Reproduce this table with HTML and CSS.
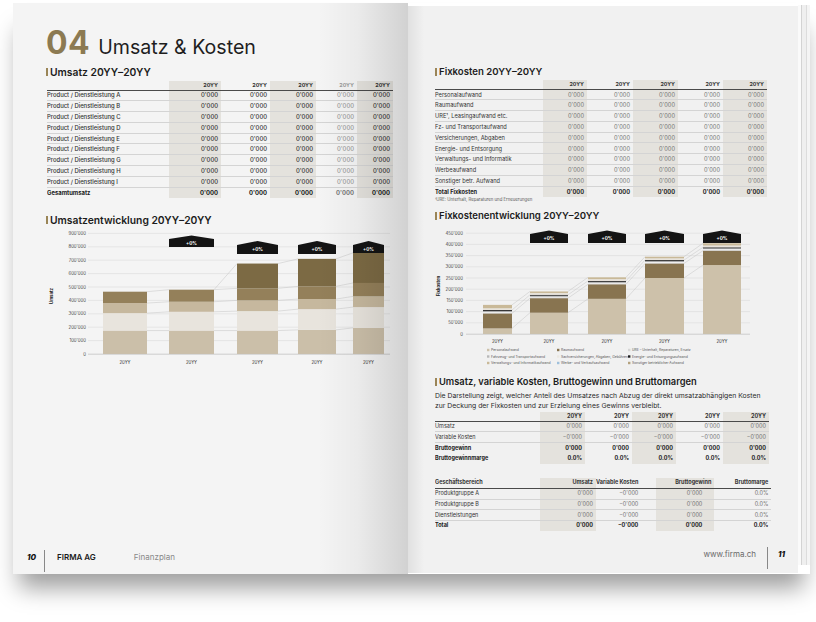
FILE: index.html
```html
<!DOCTYPE html>
<html lang="de">
<head>
<meta charset="utf-8">
<title>Umsatz &amp; Kosten – Finanzplan</title>
<link rel="stylesheet" href="styles.css">
</head>
<body>
<div class="book">
  <section class="page page-left">
    <div class="content">
      <h1 class="title"><span class="num">04</span><span class="title-text">Umsatz &amp; Kosten</span></h1>
      <h2 class="sec sec-a">Umsatz 20YY–20YY</h2>
      <table class="tbl tbl-umsatz">
        <colgroup><col class="w122"><col class="w52"><col class="w49"><col class="w46"><col class="w41"><col class="w36"></colgroup>
        <thead><tr><th></th><th class="sh">20YY</th><th>20YY</th><th class="sh">20YY</th><th class="fade">20YY</th><th class="sh">20YY</th></tr></thead>
        <tbody>
          <tr><td>Product / Dienstleistung A</td><td class="sh">0'000</td><td>0'000</td><td class="sh">0'000</td><td class="fade">0'000</td><td class="sh">0'000</td></tr>
          <tr><td>Product / Dienstleistung B</td><td class="sh">0'000</td><td>0'000</td><td class="sh">0'000</td><td class="fade">0'000</td><td class="sh">0'000</td></tr>
          <tr><td>Product / Dienstleistung C</td><td class="sh">0'000</td><td>0'000</td><td class="sh">0'000</td><td class="fade">0'000</td><td class="sh">0'000</td></tr>
          <tr><td>Product / Dienstleistung D</td><td class="sh">0'000</td><td>0'000</td><td class="sh">0'000</td><td class="fade">0'000</td><td class="sh">0'000</td></tr>
          <tr><td>Product / Dienstleistung E</td><td class="sh">0'000</td><td>0'000</td><td class="sh">0'000</td><td class="fade">0'000</td><td class="sh">0'000</td></tr>
          <tr><td>Product / Dienstleistung F</td><td class="sh">0'000</td><td>0'000</td><td class="sh">0'000</td><td class="fade">0'000</td><td class="sh">0'000</td></tr>
          <tr><td>Product / Dienstleistung G</td><td class="sh">0'000</td><td>0'000</td><td class="sh">0'000</td><td class="fade">0'000</td><td class="sh">0'000</td></tr>
          <tr><td>Product / Dienstleistung H</td><td class="sh">0'000</td><td>0'000</td><td class="sh">0'000</td><td class="fade">0'000</td><td class="sh">0'000</td></tr>
          <tr><td>Product / Dienstleistung I</td><td class="sh">0'000</td><td>0'000</td><td class="sh">0'000</td><td class="fade">0'000</td><td class="sh">0'000</td></tr>
          <tr class="total"><td>Gesamtumsatz</td><td class="sh">0'000</td><td>0'000</td><td class="sh">0'000</td><td class="fade">0'000</td><td class="sh">0'000</td></tr>
        </tbody>
      </table>
      <h2 class="sec sec-b">Umsatzentwicklung 20YY–20YY</h2>
      <svg class="chart chart-umsatz" width="355" height="142" viewBox="0 0 355 142">
        <g class="grid">
          <path d="M48 126H350M48 112.6H350M48 99.2H350M48 85.8H350M48 72.4H350M48 59H350M48 45.6H350M48 32.2H350M48 18.8H350M48 5.4H350"/>
        </g>
        <g class="ylab" text-anchor="end">
          <text x="46" y="127.6">0</text>
          <text x="46" y="114.2">100'000</text>
          <text x="46" y="100.8">200'000</text>
          <text x="46" y="87.4">300'000</text>
          <text x="46" y="74">400'000</text>
          <text x="46" y="60.6">500'000</text>
          <text x="46" y="47.2">600'000</text>
          <text x="46" y="33.8">700'000</text>
          <text x="46" y="20.4">800'000</text>
          <text x="46" y="7">900'000</text>
        </g>
        <text class="axis-title" transform="translate(13 68) rotate(-90)" text-anchor="middle">Umsatz</text>
        <g transform="translate(0 126) scale(1 -0.134)">
          <rect class="u1" x="63" y="0" width="44" height="175"/>
          <rect class="u2" x="63" y="175" width="44" height="130"/>
          <rect class="u3" x="63" y="305" width="44" height="75"/>
          <rect class="u4" x="63" y="380" width="44" height="85"/>

          <rect class="u1" x="129" y="0" width="45" height="175"/>
          <rect class="u2" x="129" y="175" width="45" height="140"/>
          <rect class="u3" x="129" y="315" width="45" height="75"/>
          <rect class="u4" x="129" y="390" width="45" height="90"/>

          <rect class="u1" x="197" y="0" width="41" height="175"/>
          <rect class="u2" x="197" y="175" width="41" height="145"/>
          <rect class="u3" x="197" y="320" width="41" height="80"/>
          <rect class="u4" x="197" y="400" width="41" height="90"/>
          <rect class="u5" x="197" y="490" width="41" height="185"/>

          <rect class="u1" x="258" y="0" width="38" height="180"/>
          <rect class="u2" x="258" y="180" width="38" height="155"/>
          <rect class="u3" x="258" y="335" width="38" height="75"/>
          <rect class="u4" x="258" y="410" width="38" height="95"/>
          <rect class="u5" x="258" y="505" width="38" height="205"/>

          <rect class="u1" x="313" y="0" width="31" height="195"/>
          <rect class="u2" x="313" y="195" width="31" height="155"/>
          <rect class="u3" x="313" y="350" width="31" height="80"/>
          <rect class="u4" x="313" y="430" width="31" height="100"/>
          <rect class="u5" x="313" y="530" width="31" height="225"/>

          <path class="link" d="M107 175L129 175M174 175L197 175M238 175L258 180M296 180L313 195M107 305L129 315M174 315L197 320M238 320L258 335M296 335L313 350M107 380L129 390M174 390L197 400M238 400L258 410M296 410L313 430M107 465L129 480M174 480L197 490M238 490L258 505M296 505L313 530M174 480L197 675M238 675L258 710M296 710L313 755"/>
        </g>
        <path class="axis" d="M48 126.3H350"/>
        <g class="badge">
          <path d="M129 11L151.5 7.5L174 11V19H129Z"/>
          <path d="M197 17L217.5 13L238 17V26H197Z"/>
          <path d="M258 17L277 13L296 17V26H258Z"/>
          <path d="M313 17L328.5 13L344 17V25H313Z"/>
        </g>
        <g class="badge-t" text-anchor="middle">
          <text x="151.5" y="16.8">+0%</text>
          <text x="217.5" y="23.3">+0%</text>
          <text x="277" y="23.3">+0%</text>
          <text x="328.5" y="22.8">+0%</text>
        </g>
        <g class="xlab" text-anchor="middle">
          <text x="85" y="136">20YY</text>
          <text x="151.5" y="136">20YY</text>
          <text x="217.5" y="136">20YY</text>
          <text x="277" y="136">20YY</text>
          <text x="328.5" y="136">20YY</text>
        </g>
      </svg>
    </div>
    <footer class="foot foot-left">
      <span class="pnum">10</span>
      <span class="firm">FIRMA AG</span>
      <span class="doc">Finanzplan</span>
    </footer>
  </section>

  <section class="page page-right">
    <div class="content">
      <h2 class="sec sec-c">Fixkosten 20YY–20YY</h2>
      <table class="tbl tbl-fix">
        <colgroup><col class="w108"><col class="w44"><col class="w46"><col class="w45"><col class="w45"><col class="w44"></colgroup>
        <thead><tr><th></th><th class="sh">20YY</th><th>20YY</th><th class="sh">20YY</th><th>20YY</th><th class="sh">20YY</th></tr></thead>
        <tbody>
          <tr><td>Personalaufwand</td><td class="sh">0'000</td><td>0'000</td><td class="sh">0'000</td><td>0'000</td><td class="sh">0'000</td></tr>
          <tr><td>Raumaufwand</td><td class="sh">0'000</td><td>0'000</td><td class="sh">0'000</td><td>0'000</td><td class="sh">0'000</td></tr>
          <tr><td>URE¹, Leasingaufwand etc.</td><td class="sh">0'000</td><td>0'000</td><td class="sh">0'000</td><td>0'000</td><td class="sh">0'000</td></tr>
          <tr><td>Fz- und Transportaufwand</td><td class="sh">0'000</td><td>0'000</td><td class="sh">0'000</td><td>0'000</td><td class="sh">0'000</td></tr>
          <tr><td>Versicherungen, Abgaben</td><td class="sh">0'000</td><td>0'000</td><td class="sh">0'000</td><td>0'000</td><td class="sh">0'000</td></tr>
          <tr><td>Energie- und Entsorgung</td><td class="sh">0'000</td><td>0'000</td><td class="sh">0'000</td><td>0'000</td><td class="sh">0'000</td></tr>
          <tr><td>Verwaltungs- und Informatik</td><td class="sh">0'000</td><td>0'000</td><td class="sh">0'000</td><td>0'000</td><td class="sh">0'000</td></tr>
          <tr><td>Werbeaufwand</td><td class="sh">0'000</td><td>0'000</td><td class="sh">0'000</td><td>0'000</td><td class="sh">0'000</td></tr>
          <tr><td>Sonstiger betr. Aufwand</td><td class="sh">0'000</td><td>0'000</td><td class="sh">0'000</td><td>0'000</td><td class="sh">0'000</td></tr>
          <tr class="total"><td>Total Fixkosten</td><td class="sh">0'000</td><td>0'000</td><td class="sh">0'000</td><td>0'000</td><td class="sh">0'000</td></tr>
        </tbody>
      </table>
      <p class="note">¹URE: Unterhalt, Reparaturen und Erneuerungen</p>

      <h2 class="sec sec-d">Fixkostenentwicklung 20YY–20YY</h2>
      <svg class="chart chart-fix" width="330" height="140" viewBox="0 0 330 140">
        <g class="grid">
          <path d="M36 107H320M36 95.8H320M36 84.6H320M36 73.4H320M36 62.2H320M36 51H320M36 39.8H320M36 28.6H320M36 17.4H320M36 6.2H320"/>
        </g>
        <g class="ylab" text-anchor="end">
          <text x="33" y="108.5">0</text>
          <text x="33" y="97.3">50'000</text>
          <text x="33" y="86.1">100'000</text>
          <text x="33" y="74.9">150'000</text>
          <text x="33" y="63.7">200'000</text>
          <text x="33" y="52.5">250'000</text>
          <text x="33" y="41.3">300'000</text>
          <text x="33" y="30.1">350'000</text>
          <text x="33" y="18.9">400'000</text>
          <text x="33" y="7.7">450'000</text>
        </g>
        <text class="axis-title" transform="translate(9.5 59) rotate(-90)" text-anchor="middle">Fixkosten</text>
        <g transform="translate(0 107) scale(1 -0.224)">
          <rect class="f1" x="53" y="0" width="29" height="25"/>
          <rect class="f2" x="53" y="25" width="29" height="67"/>
          <rect class="f3" x="53" y="92" width="29" height="4"/>
          <rect class="f4" x="53" y="96" width="29" height="3"/>
          <rect class="f5" x="53" y="99" width="29" height="4"/>
          <rect class="f6" x="53" y="103" width="29" height="4"/>
          <rect class="f7" x="53" y="107" width="29" height="8"/>
          <rect class="f8" x="53" y="115" width="29" height="15"/>

          <rect class="f1" x="100" y="0" width="38" height="95"/>
          <rect class="f2" x="100" y="95" width="38" height="65"/>
          <rect class="f3" x="100" y="160" width="38" height="4"/>
          <rect class="f4" x="100" y="164" width="38" height="3"/>
          <rect class="f5" x="100" y="167" width="38" height="4"/>
          <rect class="f6" x="100" y="171" width="38" height="4"/>
          <rect class="f7" x="100" y="175" width="38" height="8"/>
          <rect class="f8" x="100" y="183" width="38" height="7"/>

          <rect class="f1" x="158" y="0" width="38" height="157"/>
          <rect class="f2" x="158" y="157" width="38" height="65"/>
          <rect class="f3" x="158" y="222" width="38" height="4"/>
          <rect class="f4" x="158" y="226" width="38" height="3"/>
          <rect class="f5" x="158" y="229" width="38" height="4"/>
          <rect class="f6" x="158" y="233" width="38" height="4"/>
          <rect class="f7" x="158" y="237" width="38" height="8"/>
          <rect class="f8" x="158" y="245" width="38" height="8"/>

          <rect class="f1" x="215" y="0" width="39" height="250"/>
          <rect class="f2" x="215" y="250" width="39" height="65"/>
          <rect class="f3" x="215" y="315" width="39" height="4"/>
          <rect class="f4" x="215" y="319" width="39" height="3"/>
          <rect class="f5" x="215" y="322" width="39" height="4"/>
          <rect class="f6" x="215" y="326" width="39" height="4"/>
          <rect class="f7" x="215" y="330" width="39" height="8"/>
          <rect class="f8" x="215" y="338" width="39" height="7"/>

          <rect class="f1" x="273" y="0" width="38" height="308"/>
          <rect class="f2" x="273" y="308" width="38" height="64"/>
          <rect class="f3" x="273" y="372" width="38" height="4"/>
          <rect class="f4" x="273" y="376" width="38" height="3"/>
          <rect class="f5" x="273" y="379" width="38" height="4"/>
          <rect class="f6" x="273" y="383" width="38" height="4"/>
          <rect class="f7" x="273" y="387" width="38" height="8"/>
          <rect class="f8" x="273" y="395" width="38" height="10"/>

          <path class="link" d="M82 25L100 95M138 95L158 157M196 157L215 250M254 250L273 308M82 92L100 160M138 160L158 222M196 222L215 315M254 315L273 372M82 107L100 175M138 175L158 237M196 237L215 330M254 330L273 387M82 130L100 190M138 190L158 253M196 253L215 345M254 345L273 405"/>
        </g>
        <path class="axis" d="M36 107.3H320"/>
        <g class="badge">
          <path d="M100 7L119 3.5L138 7V16H100Z"/>
          <path d="M158 7L177 3.5L196 7V16H158Z"/>
          <path d="M215 7L234.5 3.5L254 7V16H215Z"/>
          <path d="M273 7L292 3.5L311 7V16H273Z"/>
        </g>
        <g class="badge-t" text-anchor="middle">
          <text x="119" y="13.3">+0%</text>
          <text x="177" y="13.3">+0%</text>
          <text x="234.5" y="13.3">+0%</text>
          <text x="292" y="13.3">+0%</text>
        </g>
        <g class="xlab" text-anchor="middle">
          <text x="67.5" y="116">20YY</text>
          <text x="119" y="116">20YY</text>
          <text x="177" y="116">20YY</text>
          <text x="234.5" y="116">20YY</text>
          <text x="292" y="116">20YY</text>
        </g>
        <g class="legend">
          <rect class="f1" x="57" y="121.8" width="2.4" height="2.4"/><text x="61" y="124.2">Personalaufwand</text>
          <rect class="f2" x="127" y="121.8" width="2.4" height="2.4"/><text x="131" y="124.2">Raumaufwand</text>
          <rect class="f3" x="198" y="121.8" width="2.4" height="2.4"/><text x="202" y="124.2">URE – Unterhalt, Reparaturen, Ersatz</text>
          <rect class="lg-grey" x="57" y="128.3" width="2.4" height="2.4"/><text x="61" y="130.7">Fahrzeug- und Transportaufwand</text>
          <rect class="lg-light" x="127" y="128.3" width="2.4" height="2.4"/><text x="131" y="130.7">Sachversicherungen, Abgaben, Gebühren</text>
          <rect class="f6" x="198" y="128.3" width="2.4" height="2.4"/><text x="202" y="130.7">Energie- und Entsorgungsaufwand</text>
          <rect class="f8" x="57" y="134.8" width="2.4" height="2.4"/><text x="61" y="137.2">Verwaltungs- und Informatikaufwand</text>
          <rect class="lg-blue" x="127" y="134.8" width="2.4" height="2.4"/><text x="131" y="137.2">Werbe- und Verkaufsaufwand</text>
          <rect class="lg-tan" x="198" y="134.8" width="2.4" height="2.4"/><text x="202" y="137.2">Sonstiger betrieblicher Aufwand</text>
        </g>
      </svg>

      <h2 class="sec sec-e">Umsatz, variable Kosten, Bruttogewinn und Bruttomargen</h2>
      <p class="lead">Die Darstellung zeigt, welcher Anteil des Umsatzes nach Abzug der direkt umsatzabhängigen Kosten zur Deckung der Fixkosten und zur Erzielung eines Gewinns verbleibt.</p>
      <table class="tbl tbl-brutto">
        <colgroup><col class="w105"><col class="w45"><col class="w47"><col class="w44"><col class="w47"><col class="w46"></colgroup>
        <thead><tr><th></th><th class="sh">20YY</th><th>20YY</th><th class="sh">20YY</th><th>20YY</th><th class="sh">20YY</th></tr></thead>
        <tbody>
          <tr><td>Umsatz</td><td class="sh">0'000</td><td>0'000</td><td class="sh">0'000</td><td>0'000</td><td class="sh">0'000</td></tr>
          <tr><td>Variable Kosten</td><td class="sh">−0'000</td><td>−0'000</td><td class="sh">−0'000</td><td>−0'000</td><td class="sh">−0'000</td></tr>
          <tr class="total"><td>Bruttogewinn</td><td class="sh">0'000</td><td>0'000</td><td class="sh">0'000</td><td>0'000</td><td class="sh">0'000</td></tr>
          <tr class="bold"><td>Bruttogewinnmarge</td><td class="sh">0.0%</td><td>0.0%</td><td class="sh">0.0%</td><td>0.0%</td><td class="sh">0.0%</td></tr>
        </tbody>
      </table>
      <table class="tbl tbl-bereich">
        <colgroup><col class="w105"><col class="w56"><col class="w58"><col class="w58"><col class="w57"></colgroup>
        <thead><tr><th>Geschäftsbereich</th><th class="sh">Umsatz</th><th class="pad-var">Variable Kosten</th><th class="sh">Bruttogewinn</th><th>Bruttomarge</th></tr></thead>
        <tbody>
          <tr><td>Produktgruppe A</td><td class="sh">0'000</td><td class="pad-var">−0'000</td><td class="sh pad-bg">0'000</td><td>0.0%</td></tr>
          <tr><td>Produktgruppe B</td><td class="sh">0'000</td><td class="pad-var">−0'000</td><td class="sh pad-bg">0'000</td><td>0.0%</td></tr>
          <tr><td>Dienstleistungen</td><td class="sh">0'000</td><td class="pad-var">−0'000</td><td class="sh pad-bg">0'000</td><td>0.0%</td></tr>
          <tr class="total"><td>Total</td><td class="sh">0'000</td><td class="pad-var">−0'000</td><td class="sh pad-bg">0'000</td><td>0.0%</td></tr>
        </tbody>
      </table>
    </div>
    <footer class="foot foot-right">
      <span class="url">www.firma.ch</span>
      <span class="pnum pnum-r">11</span>
    </footer>
  </section>
  <div class="edge"></div>
</div>
</body>
</html>
```

FILE: styles.css
```css
html, body {
  margin: 0;
  padding: 0;
  width: 816px;
  height: 622px;
  overflow: hidden;
  background: #ffffff;
  font-family: Inter, "Noto Sans", "Liberation Sans", sans-serif;
  color: #222;
}

.book {
  display: flex;
  align-items: flex-start;
  margin: 3px 0 0 13px;
  width: 797px;
  box-shadow: 0 20px 22px -6px rgba(0, 0, 0, 0.38);
}

.page {
  position: relative;
  display: flex;
  flex-direction: column;
  box-sizing: border-box;
}

.page-left {
  width: 395px;
  height: 571px;
  padding: 24px 0 2px 14px;
  background: #f4f4f4;
}

.page-left::after {
  content: "";
  position: absolute;
  top: 0;
  right: 0;
  bottom: 0;
  width: 90px;
  background: linear-gradient(90deg, rgba(0,0,0,0) 0%, rgba(0,0,0,0.04) 45%, rgba(0,0,0,0.14) 100%);
  pointer-events: none;
}

.page-right {
  width: 390px;
  height: 567px;
  margin-top: 3px;
  padding: 54px 0 4px 27px;
  background: #f1f1f1;
}

.page-right::before {
  content: "";
  position: absolute;
  top: 0;
  left: 0;
  bottom: 0;
  width: 16px;
  background: linear-gradient(90deg, rgba(0,0,0,0.07), rgba(0,0,0,0));
  pointer-events: none;
}

.page-left .content {
  margin-left: 19px;
}

.edge {
  width: 12px;
  height: 560px;
  margin-top: 2px;
  background: linear-gradient(90deg, #fafafa 0 3px, #d3d3d3 3px 4px, #efefef 4px 8px, #dcdcdc 8px 9px, #f4f4f4 9px 12px);
}

/* Title */
.title {
  display: flex;
  align-items: baseline;
  margin: 0;
  height: 32px;
  line-height: 32px;
  font-weight: 400;
}

.num {
  font-size: 32px;
  font-weight: 700;
  color: #8c7a52;
  letter-spacing: 0.5px;
}

.title-text {
  margin-left: 8px;
  font-size: 19.6px;
  color: #1e1e1e;
}

/* Section headings */
.sec {
  display: flex;
  align-items: center;
  margin: 0;
  height: 12px;
  font-size: 10.3px;
  line-height: 12px;
  font-weight: 600;
  color: #1c1c1c;
  white-space: nowrap;
}

.sec::before {
  content: "";
  width: 2px;
  height: 8px;
  margin-right: 2px;
  background: #9a8557;
}

.sec-a { margin-top: 7px; }
.sec-b { margin-top: 16px; }
.sec-c { margin-top: 6px; font-size: 9.6px; }
.sec-d { margin-top: 7px; font-size: 9.6px; }
.sec-e { margin-top: 9px; font-size: 9.3px; }

/* Tables */
.tbl {
  border-collapse: collapse;
  table-layout: fixed;
  font-size: 5.5px;
  color: #333;
}

.tbl th,
.tbl td {
  box-sizing: border-box;
  height: 10.8px;
  padding: 0 3px 0 0;
  text-align: right;
  line-height: 1;
  white-space: nowrap;
  overflow: hidden;
  border-bottom: 0.5px solid #d4d4d4;
}

.tbl th:first-child,
.tbl td:first-child {
  text-align: left;
  padding: 0;
}

.tbl thead th {
  height: 9px;
  font-weight: 700;
  border-bottom: 1px solid #4a4a4a;
  vertical-align: middle;
}

.tbl .sh {
  background: #e4e2dd;
}

.tbl .total td {
  font-weight: 700;
  border-top: 1px solid #3a3a3a;
  border-bottom: none;
  color: #1a1a1a;
}

.tbl .bold td {
  font-weight: 700;
  border-bottom: none;
  color: #1a1a1a;
}

.w122 { width: 122px; }
.w52 { width: 52px; }
.w49 { width: 49px; }
.w46 { width: 46px; }
.w41 { width: 41px; }
.w36 { width: 36px; }
.w108 { width: 108px; }
.w44 { width: 44px; }
.w45 { width: 45px; }
.w47 { width: 47px; }
.w105 { width: 105px; }
.w56 { width: 56px; }
.w58 { width: 58px; }
.w57 { width: 57px; }

.tbl-umsatz { margin-top: 3px; margin-left: 1px; font-size: 5.9px; }
.tbl-umsatz thead th { font-size: 5.4px; }
.tbl-umsatz td { font-weight: 500; }
.tbl-umsatz .fade { color: #9a9a9a; }
.tbl-umsatz .total td.fade { color: #777; }

.tbl-fix { margin-top: 2px; font-size: 5.7px; }
.tbl-fix td { color: #707070; }
.tbl-fix td:first-child { color: #333; }
.tbl-fix thead th { color: #333; font-size: 5.3px; }
.tbl-fix .total td { color: #1a1a1a; height: 11px; }

.note {
  margin: 0;
  height: 6px;
  font-size: 4.3px;
  line-height: 6px;
  color: #555;
}

.tbl-brutto { margin-top: 2px; }
.tbl-brutto td { color: #707070; }
.tbl-brutto td:first-child { color: #333; }
.tbl-brutto .total td,
.tbl-brutto .bold td { color: #1a1a1a; }

.tbl-bereich { margin-top: 14px; }
.tbl-bereich thead th { height: 10px; }
.tbl-bereich td { color: #707070; }
.tbl-bereich td:first-child { color: #333; }
.tbl-bereich .total td { color: #1a1a1a; height: 10px; }
.tbl-bereich .pad-var { padding-right: 18px; }
.tbl-bereich td.pad-bg { padding-right: 12px; }

.lead {
  margin: 3px 0 0;
  width: 336px;
  font-size: 6.85px;
  line-height: 9.5px;
  color: #2a2a2a;
}

/* Charts */
.chart {
  display: block;
  overflow: visible;
}

.chart-umsatz { margin: 2px 0 0 -6px; }
.chart-fix { margin: 5px 0 0 -5px; }

.chart .grid path { stroke: #d6d6d6; stroke-width: 0.5; fill: none; }
.chart .axis { stroke: #bdbdbd; stroke-width: 0.5; fill: none; }
.chart .link { stroke: #c4c4c4; stroke-width: 0.5; fill: none; vector-effect: non-scaling-stroke; }
.chart text { font-family: Inter, "Noto Sans", sans-serif; }
.chart .ylab text { font-size: 4.3px; fill: #444; }
.chart .xlab text { font-size: 4.3px; fill: #333; }
.chart .axis-title { font-size: 4.3px; font-weight: 700; fill: #222; }
.chart .badge path { fill: #141414; }
.chart .badge-t text { font-size: 4.6px; font-weight: 700; fill: #fff; }
.chart .legend text { font-size: 3.4px; fill: #555; }

.u1 { fill: #cbbfa9; }
.u2 { fill: #e8e4dd; }
.u3 { fill: #c6b89e; }
.u4 { fill: #94805a; }
.u5 { fill: #7c6a44; }

.f1 { fill: #cdc1aa; }
.f2 { fill: #887450; }
.f3 { fill: #d6d6d6; }
.f4 { fill: #f7f7f7; }
.f5 { fill: #9d9d9d; }
.f6 { fill: #1e1e1e; }
.f7 { fill: #e7e2da; }
.f8 { fill: #c9b998; }
.lg-grey { fill: #b8b8b8; }
.lg-light { fill: #ebe8e2; }
.lg-blue { fill: #9fc0dc; }
.lg-tan { fill: #b4a27e; }

/* Footers */
.foot {
  display: flex;
  align-items: flex-start;
  height: 22px;
  margin-top: auto;
  font-size: 8px;
  line-height: 14px;
}

.foot-left .pnum {
  width: 17px;
  font-weight: 800;
  font-style: italic;
  color: #111;
}

.foot-left .firm {
  height: 22px;
  padding-left: 12px;
  border-left: 1px solid #888;
  font-weight: 600;
  color: #1a1a1a;
}

.foot-left .doc {
  margin-left: 38px;
  color: #888;
}

.foot-right {
  justify-content: flex-end;
  padding-right: 13px;
}

.foot-right .url {
  padding-right: 11px;
  color: #6a6a6a;
  font-size: 8px;
}

.foot-right .pnum-r {
  height: 22px;
  padding-left: 10px;
  width: 7px;
  border-left: 1px solid #888;
  font-weight: 800;
  font-style: italic;
  color: #111;
}
```
